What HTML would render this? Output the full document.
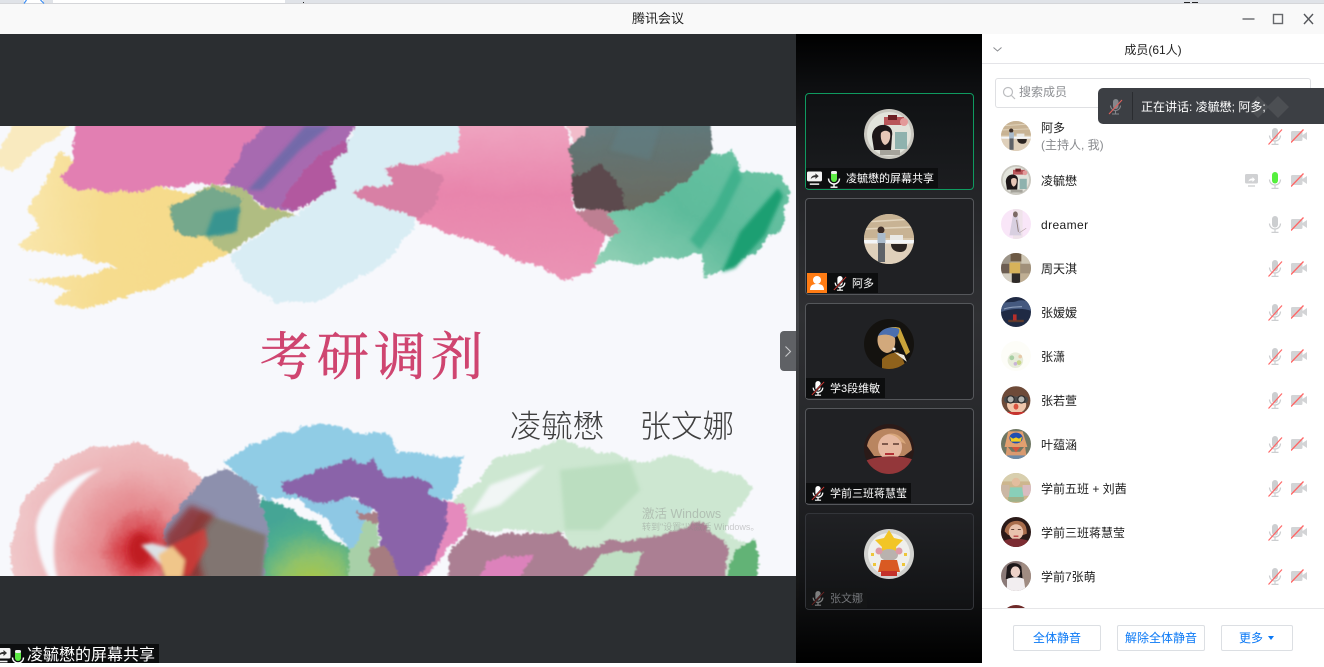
<!DOCTYPE html>
<html lang="zh"><head><meta charset="utf-8"><title>腾讯会议</title>
<style>
*{box-sizing:border-box}
html,body{margin:0;padding:0;width:1324px;height:663px;overflow:hidden;background:#fff;font-family:"Liberation Sans","Noto Sans CJK SC",sans-serif}
.a{position:absolute}
#top{left:0;top:0;width:1324px;height:4px;background:#e0e3e8;border-bottom:1px solid #d5d6d9}
#title{left:0;top:4px;width:1324px;height:30px;background:#f9f9f9;text-align:center;font-size:13px;line-height:30px;color:#222;padding-right:8px}
#main{left:0;top:34px;width:796px;height:629px;background:#2b2e31}
#slide{left:0;top:126px;width:796px;height:450px;overflow:hidden}
#side{left:796px;top:34px;width:186px;height:629px;background:linear-gradient(180deg,#000 0,#0d0e10 8%,#232427 24%,#2f3033 45%,#26272a 65%,#161719 85%,#000 100%)}
#sidestrip{left:796px;top:34px;width:3px;height:629px;background:linear-gradient(180deg,#000,#4a4c50 45%,#333 70%,#000);opacity:.7}
.tile{position:absolute;left:805px;width:169px;height:97px;border:1px solid #55575b;border-radius:4px;background:#202124}
.lab{position:absolute;height:20px;background:#0d0e0f;color:#fff;font-size:11px;line-height:20px;white-space:nowrap}
.right{left:982px;top:34px;width:342px;height:629px;background:#fff}
.row{position:absolute;left:1041px;font-size:12px;color:#1c1c1c;white-space:nowrap;line-height:16px;margin-top:1px}
.av{position:absolute;filter:blur(.35px)}
.btn{position:absolute;top:625px;height:26px;border:1px solid #dcdfe3;border-radius:2px;background:#fff;color:#0a78f5;font-size:12px;line-height:24px;text-align:center}
.ic{position:absolute}
</style></head><body>
<svg width="0" height="0" style="position:absolute">
<defs>
<filter id="rough" filterUnits="userSpaceOnUse" x="-20" y="100" width="840" height="500"><feTurbulence type="fractalNoise" baseFrequency="0.035" numOctaves="4" seed="7" result="t1"/><feDisplacementMap in="SourceGraphic" in2="t1" scale="13" xChannelSelector="R" yChannelSelector="G" result="d1"/><feTurbulence type="fractalNoise" baseFrequency="0.35" numOctaves="2" seed="3" result="t2"/><feDisplacementMap in="d1" in2="t2" scale="6" xChannelSelector="R" yChannelSelector="G" result="d2"/><feGaussianBlur in="d2" stdDeviation=".7"/></filter>
<filter id="soft" filterUnits="userSpaceOnUse" x="-20" y="100" width="840" height="500"><feGaussianBlur stdDeviation="3.500"/></filter>
<filter id="soft1" filterUnits="userSpaceOnUse" x="-20" y="100" width="840" height="500"><feGaussianBlur stdDeviation="1.800"/></filter>
<clipPath id="c"><circle cx="25" cy="25" r="25"/></clipPath>
<radialGradient id="core" gradientUnits="userSpaceOnUse" cx="140" cy="548" r="128"><stop offset="0" stop-color="#c9161f"/><stop offset=".14" stop-color="#d63f47"/><stop offset=".32" stop-color="#e58a8f"/><stop offset=".62" stop-color="#ecb0b3"/><stop offset="1" stop-color="#f0c8ca"/></radialGradient>
<radialGradient id="gy" gradientUnits="userSpaceOnUse" cx="312" cy="590" r="80"><stop offset="0" stop-color="#b3c83a"/><stop offset=".4" stop-color="#8fc26a"/><stop offset=".75" stop-color="#4fae8e"/><stop offset="1" stop-color="#45a595"/></radialGradient>
<linearGradient id="yel" x1="0" y1="0" x2="1" y2="0"><stop offset="0" stop-color="#f9e6ac"/><stop offset=".3" stop-color="#f6dc8e"/><stop offset="1" stop-color="#f4d987"/></linearGradient>
<linearGradient id="grn" x1="0" y1="1" x2="1" y2="0"><stop offset="0" stop-color="#9cd5bb"/><stop offset=".5" stop-color="#5dbb9b"/><stop offset="1" stop-color="#6cc4a4"/></linearGradient>
<linearGradient id="pk" x1="0" y1="0" x2="0" y2="1"><stop offset="0" stop-color="#f0a9c3"/><stop offset=".5" stop-color="#e885ac"/><stop offset="1" stop-color="#ea93b4"/></linearGradient>
<linearGradient id="dk" x1="0" y1="0" x2="0" y2="1"><stop offset="0" stop-color="#5f7a7e"/><stop offset="1" stop-color="#6a6a60"/></linearGradient>
<symbol id="mic" viewBox="0 0 16 18"><rect x="5" y="1" width="6" height="11.500" rx="3" fill="#ccced0"/><path d="M2.500 8.500a5.500 5.500 0 0 0 11 0" fill="none" stroke="#ccced0" stroke-width="1.200"/><path d="M8 14v3M4.500 17.400h7" stroke="#ccced0" stroke-width="1.200"/></symbol>
<symbol id="micm" viewBox="0 0 16 18"><use href="#mic" width="16" height="18"/><path d="M1.500 17.500L15 2.500" stroke="#f66" stroke-width="1.200"/></symbol>
<symbol id="micg" viewBox="0 0 16 18"><rect x="5" y="1" width="6" height="11.500" rx="3" fill="#55ef3e"/><path d="M2.500 8.500a5.500 5.500 0 0 0 11 0" fill="none" stroke="#ccced0" stroke-width="1.200"/><path d="M8 14v3M4.500 17.400h7" stroke="#ccced0" stroke-width="1.200"/></symbol>
<symbol id="vid" viewBox="0 0 16 14"><rect x="0" y="2" width="11.500" height="10" rx="1.500" fill="#d3d4d6"/><path d="M11.500 6L16 3v8l-4.500-3z" fill="#d3d4d6"/><path d="M0 13.500L12.500 .5" stroke="#f66" stroke-width="1.300"/></symbol>
<symbol id="wmic" viewBox="0 0 16 18"><rect x="5" y="1" width="6" height="11" rx="3" fill="#fff"/><path d="M2.500 8.500a5.500 5.500 0 0 0 11 0" fill="none" stroke="#fff" stroke-width="1.400"/><path d="M8 14v3M4.500 17.200h7" stroke="#fff" stroke-width="1.400"/><path d="M1 17L15 2" stroke="#111" stroke-width="2.200"/><path d="M1 17L15 2" stroke="#e53935" stroke-width="1"/></symbol>
<symbol id="gmic" viewBox="0 0 16 18"><rect x="5" y="1" width="6" height="11" rx="3" fill="#5dea45"/><rect x="5" y="1" width="6" height="3" rx="1.500" fill="#eee"/><path d="M2.500 8.500a5.500 5.500 0 0 0 11 0" fill="none" stroke="#fff" stroke-width="1.400"/><path d="M8 14v3M4.500 17.200h7" stroke="#fff" stroke-width="1.400"/></symbol>
<symbol id="share" viewBox="0 0 16 15"><rect x="0" y="0" width="16" height="10.500" rx="1.500" fill="#f4f4f4"/><path d="M4 8c.5-3 2.500-4 5-4V2l3.500 3L9 8V6C7 6 5.500 6.500 4 8z" fill="#333"/><path d="M3 13.500h10" stroke="#f4f4f4" stroke-width="1.600"/></symbol>

<symbol id="a1" viewBox="0 0 50 50"><g clip-path="url(#c)"><rect width="50" height="50" fill="#c9c7bf"/><circle cx="25" cy="25" r="22" fill="#e2e3db"/><rect x="20" y="8" width="20" height="8" fill="#b9565a"/><rect x="24" y="6" width="9" height="5" fill="#6b1f23"/><circle cx="40" cy="13" r="4" fill="#e39a9a"/><rect x="31" y="23" width="12" height="17" fill="#8fb2ae"/><path d="M8 28c0-9 7-13 13-12 6 1 8 6 7 11l-1 14H10z" fill="#1d1618"/><path d="M17 24c2-3 7-3 9 0 1 5-1 11-5 12-3-1-5-7-4-12z" fill="#e7c6b6"/><rect x="16" y="41" width="20" height="5" fill="#a5a39b"/></g></symbol>
<symbol id="a2" viewBox="0 0 50 50"><g clip-path="url(#c)"><rect width="50" height="50" fill="#d9c8ad"/><rect y="0" width="50" height="24" fill="#c8b394"/><path d="M0 8L50 5M0 15L50 13" stroke="#e2d4bc" stroke-width="1.500"/><rect y="26" width="50" height="24" fill="#dfd0bb"/><rect y="26" width="50" height="3.500" fill="#f4f6f8"/><rect x="26" y="21" width="13" height="5" fill="#e9e9e6"/><path d="M27 30h16c0 7-4 8-7 8-4 0-9-2-9-8z" fill="#2b2421"/><circle cx="17" cy="16" r="3.500" fill="#3a2b25"/><rect x="13.500" y="19" width="8" height="10" fill="#aabbcb"/><rect x="14" y="29" width="7" height="19" fill="#5e6268"/></g></symbol>
<symbol id="a3" viewBox="0 0 50 50"><g clip-path="url(#c)"><rect width="50" height="50" fill="#14120f"/><path d="M14 18c2-8 14-12 22-9l10 24-4 3-10-22z" fill="#c9a33a"/><path d="M14 17c4-9 14-10 21-7 1 4-2 8-5 9-6-3-12-3-16-2z" fill="#4b6fae"/><path d="M14 17c5-2 12-2 17 2 1 7-1 14-8 15-7-1-11-9-9-17z" fill="#d2a97c"/><path d="M18 40c6-6 12-6 16-7 3 4 7 10 8 17H18z" fill="#8f621c"/><circle cx="30" cy="30" r="1.500" fill="#eee"/><path d="M30 33l10 3 3 7z" fill="#efe9da"/></g></symbol>
<symbol id="a4" viewBox="0 0 50 50"><g clip-path="url(#c)"><rect width="50" height="50" fill="#2a1a18"/><path d="M3 22C6 6 22 2 34 6c10 4 13 12 14 20l-8 6L10 32z" fill="#b98560"/><ellipse cx="26" cy="23" rx="12" ry="13" fill="#e6b8a0"/><path d="M24 10c6-2 14 2 18 10l-5-2c-4-6-8-7-13-8z" fill="#d8a67a"/><path d="M0 38c8-6 36-8 50-2v14H0z" fill="#93373a"/><rect x="21" y="29" width="9" height="2" fill="#b23036"/><path d="M18 20h6M29 20h6" stroke="#5d3a30" stroke-width="1.500"/></g></symbol>
<symbol id="a5" viewBox="0 0 50 50"><g clip-path="url(#c)"><rect width="50" height="50" fill="#d2d2cf"/><circle cx="25" cy="25" r="21" fill="#efefec"/><path d="M25 1l5 8 9 2-7 7 2 8-9-4-9 4 2-8-7-7 9-2z" fill="#f2c526"/><ellipse cx="25" cy="26" rx="9" ry="6" fill="#b9b2ae"/><circle cx="15" cy="22" r="3.500" fill="#dd9aa6"/><circle cx="35" cy="22" r="3.500" fill="#dd9aa6"/><path d="M17 31h16l3 12H14z" fill="#d95a22"/><rect x="17" y="42" width="16" height="5" fill="#c4322a"/><g fill="#eec63a"><rect x="7" y="24" width="3" height="3"/><rect x="40" y="24" width="3" height="3"/><rect x="9" y="34" width="3" height="3"/><rect x="38" y="34" width="3" height="3"/></g></g></symbol>
<symbol id="b1" viewBox="0 0 50 50"><g clip-path="url(#c)"><rect width="50" height="50" fill="#f9e6f8"/><rect x="20" y="0" width="16" height="50" fill="#efe3ea"/><path d="M20 10c4-4 8-2 8 4l6 30H14z" fill="#d8cfe0"/><ellipse cx="24" cy="9" rx="4" ry="5" fill="#7d6a66"/><path d="M26 18l3 20" stroke="#8c7a76" stroke-width="1.500"/><path d="M30 40l12-8" stroke="#b5a5a5"/></g></symbol>
<symbol id="b2" viewBox="0 0 50 50"><g clip-path="url(#c)"><rect width="50" height="50" fill="#b5ab98"/><rect x="0" y="0" width="16" height="18" fill="#9c9488"/><rect x="16" y="0" width="18" height="14" fill="#6d5a45"/><rect x="34" y="2" width="16" height="16" fill="#cfc7b5"/><rect x="0" y="18" width="14" height="16" fill="#6c5d52"/><rect x="14" y="16" width="18" height="18" fill="#d7b25a"/><rect x="32" y="18" width="18" height="16" fill="#a0907a"/><rect x="0" y="34" width="18" height="16" fill="#d5cfc3"/><rect x="18" y="34" width="14" height="16" fill="#2e2a28"/><rect x="32" y="34" width="18" height="16" fill="#bfae93"/></g></symbol>
<symbol id="b3" viewBox="0 0 50 50"><g clip-path="url(#c)"><rect width="50" height="50" fill="#1f2a44"/><path d="M0 12c10-6 18-2 26-5s16-2 24 4v12c-14-5-34-4-50 2z" fill="#45597f"/><path d="M5 20c10-4 20-3 30-4" stroke="#8a9bb8" stroke-width="2" fill="none"/><rect x="12" y="38" width="26" height="4" fill="#5e3a2c"/><rect x="20" y="29" width="6" height="10" fill="#b62f2b"/></g></symbol>
<symbol id="b4" viewBox="0 0 50 50"><g clip-path="url(#c)"><rect width="50" height="50" fill="#fdfdf8"/><circle cx="24" cy="32" r="13" fill="#e7ecd9"/><circle cx="18" cy="28" r="4" fill="#a8cfa4"/><circle cx="30" cy="36" r="4" fill="#c9d78a"/><circle cx="24" cy="38" r="3" fill="#c9b4d8"/><circle cx="32" cy="26" r="3" fill="#e7c9a8"/></g></symbol>
<symbol id="b5" viewBox="0 0 50 50"><g clip-path="url(#c)"><rect width="50" height="50" fill="#fff"/><ellipse cx="25" cy="26" rx="24" ry="24" fill="#6e4a38"/><ellipse cx="26" cy="33" rx="16" ry="14" fill="#efc6ab"/><rect x="5" y="19" width="40" height="11" rx="5" fill="#4a4a4a"/><circle cx="16" cy="24" r="6" fill="#b3b2ae" stroke="#2e2e2e" stroke-width="2"/><circle cx="34" cy="24" r="6" fill="#b3b2ae" stroke="#2e2e2e" stroke-width="2"/><ellipse cx="25" cy="36" rx="4" ry="5" fill="#d8533f"/><rect x="10" y="45" width="30" height="5" fill="#c7342e"/></g></symbol>
<symbol id="b6" viewBox="0 0 50 50"><g clip-path="url(#c)"><rect width="50" height="50" fill="#6f7763"/><path d="M12 4h24l8 26H6z" fill="#e3a06f"/><ellipse cx="25" cy="15" rx="11" ry="9" fill="#1f4fb0"/><path d="M15 13l5 3 5-2 5 2 5-3-2 8h-16z" fill="#f2cf1d"/><path d="M10 28l8 10h14l8-10 3 22H7z" fill="#d99a70"/><path d="M18 30h14l-7 9z" fill="#d5543d"/><rect x="10" y="44" width="30" height="6" fill="#6b8aa8"/></g></symbol>
<symbol id="b7" viewBox="0 0 50 50"><g clip-path="url(#c)"><rect width="50" height="50" fill="#cdb68e"/><rect y="0" width="50" height="14" fill="#d8cfae"/><rect x="0" y="20" width="14" height="20" fill="#cbb7a4"/><rect x="36" y="20" width="14" height="18" fill="#d9bcc0"/><circle cx="25" cy="15" r="7" fill="#e2bd9e"/><path d="M15 24h20l3 18H13z" fill="#89cfb8"/><rect x="12" y="40" width="26" height="8" fill="#9fb089"/></g></symbol>
<symbol id="b8" viewBox="0 0 50 50"><g clip-path="url(#c)"><rect width="50" height="50" fill="#2b1a18"/><path d="M6 24C8 8 24 4 34 8c8 4 9 12 9 20l-6 2H12z" fill="#a96d4c"/><ellipse cx="25" cy="25" rx="12" ry="13" fill="#e9c2ad"/><path d="M0 42c12-8 36-8 50 0v8H0z" fill="#7c2c32"/><path d="M17 21h5M28 21h5" stroke="#4d2f26" stroke-width="1.500"/><rect x="21" y="31" width="8" height="2" fill="#b23036"/></g></symbol>
<symbol id="b9" viewBox="0 0 50 50"><g clip-path="url(#c)"><rect width="50" height="50" fill="#8b7a78"/><rect x="34" y="0" width="16" height="50" fill="#a08c82"/><path d="M10 10c4-9 20-8 24 0l2 20H8z" fill="#1c1719"/><ellipse cx="24" cy="18" rx="8" ry="9" fill="#ecd1c8"/><path d="M10 30c8-4 22-4 28 0l3 20H10z" fill="#f2eef0"/></g></symbol>
</defs></svg>

<div class="a" id="top"></div>
<div class="a" style="left:53px;top:0;width:232px;height:3px;background:#fff"></div>
<div class="a" style="left:24px;top:0;width:19px;height:3px;background:#fff"></div>
<svg class="a" style="left:22px;top:0" width="24" height="4"><path d="M2 3.500L4.500 0M22 3.500L18.500 0" stroke="#3b8cf2" stroke-width="1.200"/></svg>
<div class="a" style="left:303px;top:2px;width:1px;height:1px;background:#222"></div>
<div class="a" style="left:1184px;top:2px;width:6px;height:1px;background:#222"></div>
<div class="a" style="left:1192px;top:2px;width:6px;height:1px;background:#222"></div>
<div class="a" id="title">腾讯会议</div>
<svg class="a" style="left:1240px;top:10px" width="76" height="18"><path d="M2.500 9h12" stroke="#77797d" stroke-width="1.600"/><rect x="33.500" y="4.500" width="9" height="9" fill="none" stroke="#66686c" stroke-width="1.400"/><path d="M64 4l9 10M73 4l-9 10" stroke="#55575b" stroke-width="1.400"/></svg>
<div class="a" style="left:982px;top:34px;width:342px;height:1px;background:#e4e4e6"></div>

<div class="a" id="main"></div>
<svg class="a" id="slide" width="796" height="450" viewBox="0 126 796 450">
<rect x="0" y="126" width="796" height="450" fill="#f7f8fc"/>
<g filter="url(#rough)">
<path d="M-10 165L24 110H80L51 143 12 168Z" fill="#f9e9b8" opacity=".9"/>
<path d="M31 200L61 153 120 180 296 212 230 253 153 290 82 310 51 303 71 290 31 280 117 270 82 257 26 250 20 240 41 230 28 213Z" fill="url(#yel)"/>
<path d="M365 110H459L485 150 408 167 413 227 383 263 316 303 276 300 240 280 230 257 296 212 334 190 332 163 349 137Z" fill="#d9edf4"/>
<path d="M459 110H561L577 167 571 210 607 233 592 273 566 280 510 257 413 220 352 193 388 183 383 168 418 163 459 150Z" fill="url(#pk)"/>
<path d="M352 193L388 183 383 168 418 163 445 180 435 205 413 220Z" fill="#d880a5"/>
<path d="M561 110H625L625 150 578 158Z" fill="#f2bcca"/>
<path d="M571 210L628 205 625 245 607 235 590 225Z" fill="#bd7f92"/>
<path d="M735 150L740 173 786 173 791 200 776 233 730 270 704 278 699 257 663 257 633 263 592 263 622 233 607 213 658 200 689 180 714 157Z" fill="url(#grn)"/>
<path d="M597 110H709L714 157 689 180 658 200 628 210 574 207 574 177 569 150Z" fill="url(#dk)"/>
<path d="M574 207L574 177 600 165 624 190 622 212Z" fill="#5c4a4e"/>
<path d="M74 110V160L61 178 71 188 102 195 204 183 230 183 250 197 270 210 301 207 334 190 332 163 349 153 347 137 365 110Z" fill="#e27fb2"/>
<path d="M272 110L224 180 230 183 250 197 270 210 301 207 334 190 332 163 349 153 347 137 365 110Z" fill="#a76bb0"/>
<path d="M300 207L334 190 332 163 349 153 345 140 310 165 280 205Z" fill="#b2589f"/>
<path d="M214 183L240 187 260 207 296 212 230 253 214 247 204 237 173 228 168 207Z" fill="#b0bd82"/>
<path d="M170 206L214 186 240 198 237 232 206 237 173 228Z" fill="#74a88c"/>

<path d="M224 463L281 433 321 423 393 437 398 453 462 457 454 500 265 500Z" fill="#90cce5"/>
<path d="M454 503L500 457 561 443 633 460 684 457 755 485 735 510 724 533 755 547 755 590 577 590 566 533 469 527Z" fill="#cde7d1"/>
<circle cx="121" cy="552" r="108" fill="url(#core)"/>
<path d="M260 497L296 513 337 540 395 592H260Z" fill="url(#gy)"/>
<path d="M300 497L372 503 365 530 350 552 335 530Z" fill="#8ec8e4"/>
<path d="M350 552L365 525 378 515 382 545 398 592H352Z" fill="#a8d0a8"/>
<path d="M204 477L230 472 255 487 268 533 262 592H189L163 533 179 507Z" fill="#8d90ad"/>
<path d="M281 483L342 463 349 457 362 463 375 458 385 473 434 483 429 497 449 502 467 507 467 523 413 592H398L383 543 378 513 357 500 327 503 283 493Z" fill="#8a64a9"/>
<path d="M449 502L467 507 467 527 413 592 440 545Z" fill="#e58abd"/>
<path d="M370 546L388 543 402 592H375Z" fill="#a67c80"/>
<path d="M355 513L378 513 380 525 360 522Z" fill="#a87e85"/>
<path d="M449 560L469 527 495 533 561 532 571 547 643 540 684 530 702 520 724 543 727 592H449Z" fill="#ab7f93"/>
<path d="M470 590L490 560 530 555 510 590Z" fill="#dc82bb"/>
<path d="M577 592L600 555 640 552 630 592Z" fill="#bfe0c4"/>
<path d="M727 592L730 550 755 543 757 592Z" fill="#62b376"/>
</g>
<g filter="url(#soft1)">
<path d="M722 272L740 232 778 188 783 196 765 235 735 268Z" fill="#1b9f72"/>
<path d="M690 240L715 205 735 165 742 178 722 218 700 250Z" fill="#3aae88" opacity=".8"/>
<path d="M305 126L248 190 262 190 300 150 330 126Z" fill="#6f6aa8" opacity=".9"/>
<path d="M214 212L240 207 236 232 205 237Z" fill="#379490"/>
<path d="M620 126H660L650 160 610 150Z" fill="#5f7f85" opacity=".5"/>
<path d="M490 485L545 465 500 505 470 515Z" fill="#f7f8fc" opacity=".85"/>
<path d="M560 470L630 462 640 490 600 530 565 530Z" fill="#b7dcbc" opacity=".8"/>
<path d="M102 468C70 475 35 500 36 530 37 550 42 565 50 580L58 580C48 545 55 495 102 468Z" fill="#f7f8fc"/>
<path d="M163 576L200 512 266 535 262 580H189Z" fill="#7f7266" opacity=".85"/>
</g>
<path d="M205 580C190 545 205 525 215 515L190 505 165 535 165 580Z" fill="#8e2b2b" opacity=".8" filter="url(#soft)"/>
<ellipse cx="140" cy="550" rx="11" ry="17" fill="#c01a24" filter="url(#soft)"/>
<g filter="url(#soft1)">
<path d="M165 548L205 528 208 545 190 576H168Z" fill="#d93b35" opacity=".75"/>
<path d="M141 545L152 543 170 548 162 566Z" fill="#dce2e6"/>
<path d="M158 555L172 546 185 560 182 578H165Z" fill="#f0c68a"/>
</g>
<text x="260" y="375" font-family="'Noto Serif CJK SC','Liberation Serif',serif" font-size="52" fill="#cf4570" stroke="#cf4570" stroke-width=".6" letter-spacing="5">考研调剂</text>
<text x="510" y="437" font-family="'Liberation Sans','Noto Sans CJK SC',sans-serif" font-size="31.300" font-weight="300" fill="#3f3f3f">凌毓懋</text>
<text x="639.500" y="437" font-family="'Liberation Sans','Noto Sans CJK SC',sans-serif" font-size="31.500" font-weight="300" fill="#3f3f3f">张文娜</text>
<text x="642" y="518" font-family="'Liberation Sans','Noto Sans CJK SC',sans-serif" font-size="12.500" fill="#8a8a8a" opacity=".42">激活 Windows</text>
<text x="642" y="530" font-family="'Liberation Sans','Noto Sans CJK SC',sans-serif" font-size="9" fill="#8a8a8a" opacity=".42">转到"设置"以激活 Windows。</text>
</svg>
<div class="a" style="left:780px;top:331px;width:16px;height:40px;background:#5f6165;border-radius:4px 0 0 4px"></div>
<svg class="a" style="left:783px;top:345px" width="10" height="13"><path d="M2.500 1.500l5 5-5 5" fill="none" stroke="#c9cacc" stroke-width="1.100"/></svg>
<div class="lab" style="left:0;top:644px;width:159px;height:19px;font-size:16px;line-height:24px;overflow:hidden"><span style="position:absolute;left:27px;top:0">凌毓懋的屏幕共享</span></div>
<svg class="a" style="left:-6px;top:648px" width="17" height="15"><use href="#share" width="17" height="15"/></svg>
<svg class="a" style="left:10px;top:649px" width="16" height="18"><use href="#gmic" width="16" height="18"/></svg>

<div class="a" id="side"></div>
<div class="a" id="sidestrip"></div>
<div class="tile" style="top:93px;border-color:#0f9a60;background:linear-gradient(#0f1113,#1c1d20)"></div>
<div class="tile" style="top:198px"></div>
<div class="tile" style="top:303px"></div>
<div class="tile" style="top:408px"></div>
<div class="tile" style="top:513px;border-color:#33353a;background:linear-gradient(#202124,#111214)"></div>
<svg class="av" style="left:864px;top:109px" width="50" height="50"><use href="#a1" width="50" height="50"/></svg>
<svg class="av" style="left:864px;top:214px" width="50" height="50"><use href="#a2" width="50" height="50"/></svg>
<svg class="av" style="left:864px;top:319px" width="50" height="50"><use href="#a3" width="50" height="50"/></svg>
<svg class="av" style="left:864px;top:424px" width="50" height="50"><use href="#a4" width="50" height="50"/></svg>
<svg class="av" style="left:864px;top:529px" width="50" height="50"><use href="#a5" width="50" height="50"/></svg>

<div class="lab" style="left:806px;top:168px;width:132px"><span style="position:absolute;left:40px;top:1px">凌毓懋的屏幕共享</span></div>
<svg class="ic" style="left:807px;top:171px" width="15" height="15"><use href="#share" width="15" height="15"/></svg>
<svg class="ic" style="left:826px;top:170px" width="16" height="18"><use href="#gmic" width="16" height="18"/></svg>

<div class="a" style="left:807px;top:273px;width:20px;height:20px;background:#ff7c14"></div>
<svg class="a" style="left:807px;top:273px" width="20" height="20"><circle cx="10" cy="7" r="4" fill="#fff"/><path d="M3 17c0-5 3-6 7-6s7 1 7 6z" fill="#fff"/></svg>
<div class="lab" style="left:827px;top:273px;width:51px"><span style="position:absolute;left:25px;top:1px">阿多</span></div>
<svg class="ic" style="left:833px;top:275px" width="14" height="16"><use href="#wmic" width="14" height="16"/></svg>

<div class="lab" style="left:806px;top:378px;width:79px"><span style="position:absolute;left:24px;top:1px">学3段维敏</span></div>
<svg class="ic" style="left:811px;top:380px" width="14" height="16"><use href="#wmic" width="14" height="16"/></svg>

<div class="lab" style="left:806px;top:483px;width:105px"><span style="position:absolute;left:24px;top:1px">学前三班蒋慧莹</span></div>
<svg class="ic" style="left:811px;top:485px" width="14" height="16"><use href="#wmic" width="14" height="16"/></svg>

<div class="lab" style="left:806px;top:588px;width:61px;background:#141516;color:#74767a"><span style="position:absolute;left:24px;top:1px">张文娜</span></div>
<svg class="ic" style="left:811px;top:590px;opacity:.45" width="14" height="16"><use href="#wmic" width="14" height="16"/></svg>

<div class="a right"></div>
<div class="a" style="left:982px;top:42px;width:342px;text-align:center;font-size:12px;line-height:16px;color:#222">成员(61人)</div>
<svg class="a" style="left:992px;top:46px" width="11" height="7"><path d="M1.500 1.500L5.500 5l4-3.500" fill="none" stroke="#8a8c90" stroke-width="1"/></svg>
<div class="a" style="left:982px;top:63px;width:342px;height:1px;background:#e4e4e8"></div>
<div class="a" style="left:995px;top:78px;width:316px;height:30px;border:1px solid #dfe0e3;border-radius:3px"></div>
<svg class="a" style="left:1002px;top:86px" width="14" height="14"><circle cx="6" cy="6" r="4.500" fill="none" stroke="#bcbdc0" stroke-width="1.200"/><path d="M9.500 9.500L13 13" stroke="#bcbdc0" stroke-width="1.200"/></svg>
<div class="a" style="left:1019px;top:84px;font-size:12px;line-height:16px;color:#8d8f93">搜索成员</div>

<div class="av" style="left:1001px;top:121px;width:30px;height:30px"><svg width="30" height="30"><use href="#a2" width="30" height="30"/></svg></div>
<div class="row" style="top:119px;">阿多</div>
<div class="row" style="top:136px;color:#888a8e">(主持人, 我)</div>
<svg class="ic" style="left:1267px;top:127px" width="16" height="18"><use href="#micm" width="16" height="18"/></svg>
<svg class="ic" style="left:1291px;top:129px" width="16" height="14"><use href="#vid" width="16" height="14"/></svg>

<div class="av" style="left:1001px;top:165px;width:30px;height:30px"><svg width="30" height="30"><use href="#a1" width="30" height="30"/></svg></div>
<div class="row" style="top:172px">凌毓懋</div>
<svg class="a" style="left:1245px;top:174px" width="13" height="13"><rect width="13" height="9.500" rx="1.500" fill="#d0d1d3"/><path d="M3.500 7.500c.5-2.500 2-3 4-3V3l2.500 2.500L7.500 8V6.500c-1.500 0-3 0-4 1z" fill="#fff"/><path d="M3 12h7" stroke="#d0d1d3" stroke-width="1.400"/></svg>
<svg class="ic" style="left:1267px;top:171px" width="16" height="18"><use href="#micg" width="16" height="18"/></svg>
<svg class="ic" style="left:1291px;top:173px" width="16" height="14"><use href="#vid" width="16" height="14"/></svg>

<div class="av" style="left:1001px;top:209px;width:30px;height:30px"><svg width="30" height="30"><use href="#b1" width="30" height="30"/></svg></div>
<div class="row" style="top:216px;letter-spacing:.4px">dreamer</div>
<svg class="ic" style="left:1267px;top:215px" width="16" height="18"><use href="#mic" width="16" height="18"/></svg>
<svg class="ic" style="left:1291px;top:217px" width="16" height="14"><use href="#vid" width="16" height="14"/></svg>

<div class="av" style="left:1001px;top:253px;width:30px;height:30px"><svg width="30" height="30"><use href="#b2" width="30" height="30"/></svg></div>
<div class="row" style="top:260px">周天淇</div>
<svg class="ic" style="left:1267px;top:259px" width="16" height="18"><use href="#micm" width="16" height="18"/></svg>
<svg class="ic" style="left:1291px;top:261px" width="16" height="14"><use href="#vid" width="16" height="14"/></svg>

<div class="av" style="left:1001px;top:297px;width:30px;height:30px"><svg width="30" height="30"><use href="#b3" width="30" height="30"/></svg></div>
<div class="row" style="top:304px">张嫒嫒</div>
<svg class="ic" style="left:1267px;top:303px" width="16" height="18"><use href="#micm" width="16" height="18"/></svg>
<svg class="ic" style="left:1291px;top:305px" width="16" height="14"><use href="#vid" width="16" height="14"/></svg>

<div class="av" style="left:1001px;top:341px;width:30px;height:30px"><svg width="30" height="30"><use href="#b4" width="30" height="30"/></svg></div>
<div class="row" style="top:348px">张潇</div>
<svg class="ic" style="left:1267px;top:347px" width="16" height="18"><use href="#micm" width="16" height="18"/></svg>
<svg class="ic" style="left:1291px;top:349px" width="16" height="14"><use href="#vid" width="16" height="14"/></svg>

<div class="av" style="left:1001px;top:385px;width:30px;height:30px"><svg width="30" height="30"><use href="#b5" width="30" height="30"/></svg></div>
<div class="row" style="top:392px">张若萱</div>
<svg class="ic" style="left:1267px;top:391px" width="16" height="18"><use href="#micm" width="16" height="18"/></svg>
<svg class="ic" style="left:1291px;top:393px" width="16" height="14"><use href="#vid" width="16" height="14"/></svg>

<div class="av" style="left:1001px;top:429px;width:30px;height:30px"><svg width="30" height="30"><use href="#b6" width="30" height="30"/></svg></div>
<div class="row" style="top:436px">叶蕴涵</div>
<svg class="ic" style="left:1267px;top:435px" width="16" height="18"><use href="#micm" width="16" height="18"/></svg>
<svg class="ic" style="left:1291px;top:437px" width="16" height="14"><use href="#vid" width="16" height="14"/></svg>

<div class="av" style="left:1001px;top:473px;width:30px;height:30px"><svg width="30" height="30"><use href="#b7" width="30" height="30"/></svg></div>
<div class="row" style="top:480px">学前五班 + 刘茜</div>
<svg class="ic" style="left:1267px;top:479px" width="16" height="18"><use href="#micm" width="16" height="18"/></svg>
<svg class="ic" style="left:1291px;top:481px" width="16" height="14"><use href="#vid" width="16" height="14"/></svg>

<div class="av" style="left:1001px;top:517px;width:30px;height:30px"><svg width="30" height="30"><use href="#b8" width="30" height="30"/></svg></div>
<div class="row" style="top:524px">学前三班蒋慧莹</div>
<svg class="ic" style="left:1267px;top:523px" width="16" height="18"><use href="#micm" width="16" height="18"/></svg>
<svg class="ic" style="left:1291px;top:525px" width="16" height="14"><use href="#vid" width="16" height="14"/></svg>

<div class="av" style="left:1001px;top:561px;width:30px;height:30px"><svg width="30" height="30"><use href="#b9" width="30" height="30"/></svg></div>
<div class="row" style="top:568px">学前7张萌</div>
<svg class="ic" style="left:1267px;top:567px" width="16" height="18"><use href="#micm" width="16" height="18"/></svg>
<svg class="ic" style="left:1291px;top:569px" width="16" height="14"><use href="#vid" width="16" height="14"/></svg>

<div class="a" style="left:1001px;top:605px;width:30px;height:3px;overflow:hidden"><svg width="30" height="30" style="display:block"><circle cx="15" cy="15" r="15" fill="#6e2a28"/></svg></div>
<div class="a" style="left:982px;top:608px;width:342px;height:1px;background:#e6e6e8"></div>
<div class="btn" style="left:1013px;width:88px">全体静音</div>
<div class="btn" style="left:1117px;width:88px">解除全体静音</div>
<div class="btn" style="left:1221px;width:72px;padding-right:12px">更多<svg width="6" height="4" style="position:absolute;left:46px;top:10px"><path d="M0 0h6L3 4z" fill="#0a78f5"/></svg></div>

<div class="a" style="left:1098px;top:88px;width:226px;height:36px;background:#3c3f44;border-radius:5px 0 0 5px"></div>
<svg class="a" style="left:1108px;top:98px" width="15" height="17"><rect x="5" y="1" width="5.500" height="10" rx="2.700" fill="#85878b"/><path d="M2.500 7.500a5 5 0 0 0 10 0" fill="none" stroke="#85878b" stroke-width="1.100"/><path d="M7.500 13v3M4 16h7" stroke="#85878b" stroke-width="1.100"/><path d="M1 16L14 2" stroke="#e0605c" stroke-width="1.100"/></svg>
<div class="a" style="left:1132px;top:92px;width:1px;height:28px;background:#2a2c30"></div>
<svg class="a" style="left:1245px;top:93px" width="46" height="27"><path d="M2 14L13 3l10 10L33 3l11 11-11 11-10-10-10 10z" fill="#55585c" opacity=".65"/></svg>
<div class="a" style="left:1141px;top:99px;font-size:12px;line-height:16px;color:#fff;white-space:nowrap">正在讲话: 凌毓懋; 阿多;</div>
</body></html>
